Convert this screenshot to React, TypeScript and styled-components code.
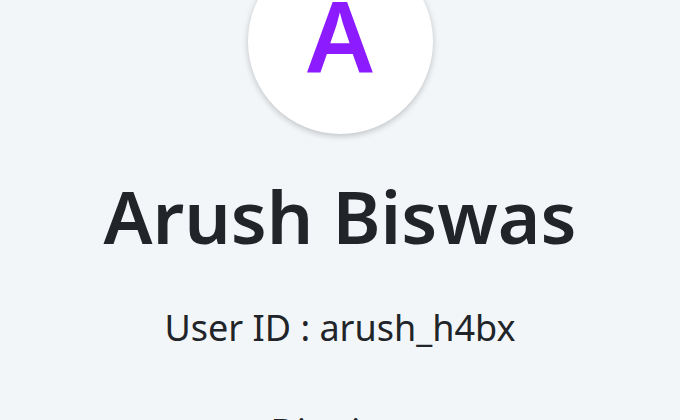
import styled, { createGlobalStyle } from "styled-components";

const GlobalStyle = createGlobalStyle`
  html, body {
    margin: 0;
    padding: 0;
    background: #f3f6f9;
    overflow: hidden;
  }
  body {
    font-family: "Noto Sans", "Open Sans", sans-serif;
    color: #212529;
  }
`;

const profile = {
  name: "Arush Biswas",
  userId: "arush_h4bx",
};

export default function App(): JSX.Element {
  return (
    <>
      <GlobalStyle />
      <Page>
        <Avatar>{profile.name.charAt(0)}</Avatar>
        <Name>{profile.name}</Name>
        <Detail>User ID : {profile.userId}</Detail>
        <Detail>District :</Detail>
      </Page>
    </>
  );
}

const Page = styled.main`
  display: flex;
  flex-direction: column;
  align-items: center;
  height: 471px;
  margin-top: -51px;
  overflow: hidden;
`;

const Avatar = styled.div`
  width: 185px;
  height: 185px;
  padding-bottom: 16px;
  box-sizing: border-box;
  border-radius: 50%;
  background: #ffffff;
  box-shadow: 0 2px 6px rgba(0, 0, 0, 0.22);
  display: flex;
  align-items: center;
  justify-content: center;
  color: #8c1bff;
  font-size: 98px;
  font-weight: 600;
  line-height: 1;
  flex-shrink: 0;
`;

const Name = styled.h1`
  margin: 38px 0 0;
  font-size: 73px;
  font-weight: 600;
  line-height: 1.2;
`;

const Detail = styled.p`
  margin: 41px 0 0;
  font-size: 36px;
  font-weight: 400;
  line-height: 1.5;
  & + & {
    margin-top: 50px;
  }
`;
